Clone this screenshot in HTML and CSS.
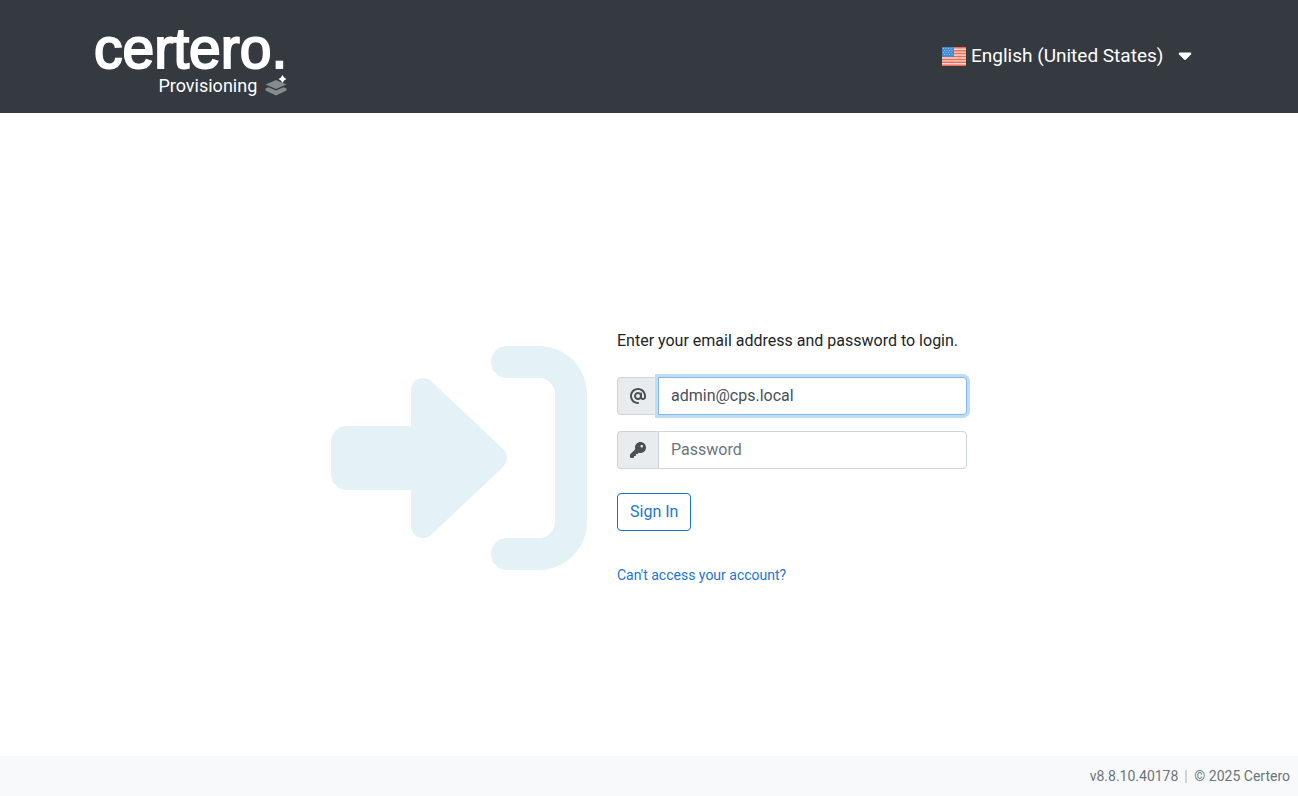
FILE: index.html
```
<!DOCTYPE html>
<html lang="en-US">

<head>
    <meta charset="UTF-8" />
    <meta name="viewport" content="width=device-width, initial-scale=1.0" />
    <title>Certero Provisioning</title>
    <link rel="stylesheet" href="styles.css">
</head>

<body>
    <header class="header">
        <div class="container">
            <a class="brand" href="#">
                <span class="brand-name">certero.</span>
                <span class="brand-product">
                    Provisioning
                    <svg class="brand-icon" viewBox="0 0 22 22" aria-hidden="true">
                        <path fill="#858a8f" d="M11 5 21.500 9.500 11 14 .5 9.500z" />
                        <path fill="#858a8f" d="M3.500 12.300 .5 13.500v2L11 20.500l10.500-5v-2l-3-1.200L11 15.500z" />
                        <path fill="#fff" d="M17.500 0 19.100 2.400 21.500 4 19.100 5.600 17.500 8 15.900 5.600 13.500 4 15.900 2.400z" />
                    </svg>
                </span>
            </a>

            <div class="language">
                <svg class="flag" viewBox="0 0 24 19" aria-hidden="true">
                    <path fill="#f5d9d2" d="M0 0h24v19H0z" />
                    <path stroke="#ee6a50" stroke-width="1.500" d="M0 .8h24M0 3.700h24M0 6.600h24M0 9.500h24M0 12.400h24M0 15.300h24M0 18.200h24" />
                    <path fill="#438bd0" d="M0 0h12v10H0z" />
                    <path stroke="#8fc0e8" stroke-dasharray="1 1.500" d="M1 1.500h10M2 3.500h9M1 5.500h10M2 7.500h9" />
                </svg>
                <select class="language-select" aria-label="Language">
                    <option>English (United States)</option>
                </select>
                <svg class="caret" viewBox="0 0 14 9" aria-hidden="true">
                    <path fill="#fff" d="M1.500.5h11q1.500.3.6 1.700L8 7.600q-1 .9-2 0L.9 2.200Q0 .8 1.500.5z" />
                </svg>
            </div>
        </div>
    </header>

    <main class="main">
        <svg class="login-icon" viewBox="0 0 512 512" aria-hidden="true">
            <path d="M344.700 238.500l-144.100-136C193.700 95.970 183.400 94.170 174.600 97.950C165.800 101.800 160.100 110.400 160.100 120v72H32.020C14.330 192 0 206.300 0 224v64c0 17.680 14.330 32 32.020 32h128.100v72c0 9.578 5.707 18.250 14.510 22.050c8.803 3.781 19.030 1.984 26-4.594l144.100-136C354.300 264.400 354.300 247.600 344.700 238.500zM416 32h-64c-17.670 0-32 14.330-32 32s14.330 32 32 32h64c17.670 0 32 14.330 32 32v256c0 17.670-14.330 32-32 32h-64c-17.670 0-32 14.330-32 32s14.330 32 32 32h64c53.020 0 96-42.980 96-96V128C512 74.980 469 32 416 32z" />
        </svg>

        <form class="login-form">
            <p class="intro">Enter your email address and password to login.</p>

            <div class="input-group">
                <label class="input-icon" for="email" aria-label="Email address">
                    <svg viewBox="0 0 512 512" aria-hidden="true">
                        <path d="M256 64C150 64 64 150 64 256s86 192 192 192c17.700 0 32 14.300 32 32s-14.300 32-32 32C114.600 512 0 397.400 0 256S114.600 0 256 0S512 114.600 512 256l0 32c0 53-43 96-96 96c-29.300 0-55.600-13.200-73.200-33.900C320 371.100 289.500 384 256 384c-70.700 0-128-57.300-128-128s57.300-128 128-128c27.900 0 53.700 8.900 74.700 24.100c5.700-5 13.100-8.100 21.300-8.100c17.700 0 32 14.300 32 32l0 80 0 32c0 17.700 14.300 32 32 32s32-14.300 32-32l0-32c0-106-86-192-192-192zm64 192a64 64 0 1 0 -128 0 64 64 0 1 0 128 0z" />
                    </svg>
                </label>
                <input class="form-control is-active" type="text" id="email" name="email" value="admin@cps.local" />
            </div>

            <div class="input-group">
                <label class="input-icon" for="password" aria-label="Password">
                    <svg viewBox="0 0 512 512" aria-hidden="true">
                        <path d="M282.300 343.700L248.100 376.100C244.500 381.500 238.400 384 232 384H192V424C192 437.300 181.300 448 168 448H128V488C128 501.300 117.300 512 104 512H24C10.750 512 0 501.300 0 488V408C0 401.600 2.529 395.500 7.029 391L168.300 229.700C162.900 212.800 160 194.700 160 176C160 78.800 238.800 0 336 0C433.200 0 512 78.800 512 176C512 273.200 433.200 352 336 352C317.300 352 299.200 349.100 282.300 343.700zM376 176C398.100 176 416 158.100 416 136C416 113.900 398.100 96 376 96C353.900 96 336 113.900 336 136C336 158.100 353.900 176 376 176z" />
                    </svg>
                </label>
                <input class="form-control" type="password" id="password" name="password" placeholder="Password" />
            </div>

            <button class="btn" type="submit">Sign In</button>

            <a class="help-link" href="#">Can't access your account?</a>
        </form>
    </main>

    <footer class="footer">
        <span>v8.8.10.40178</span>
        <span class="divider"></span>
        <span>© 2025 Certero</span>
    </footer>
</body>

</html>
```

FILE: styles.css
```
* {
    box-sizing: border-box;
}

body {
    margin: 0;
    min-height: 100vh;
    display: flex;
    flex-direction: column;
    font-family: Roboto, sans-serif;
    font-size: 16px;
    line-height: 24px;
    color: #212529;
    background: #fff;
}

/* header */
.header {
    padding: 23px 0 15px;
    background: #343a40;
    color: #fff;
}

.container {
    max-width: 1140px;
    margin: 0 auto;
    padding: 0 15px;
    display: flex;
    justify-content: space-between;
    align-items: flex-start;
}

.brand {
    display: flex;
    flex-direction: column;
    align-items: flex-end;
    color: #fff;
    text-decoration: none;
}

.brand-name {
    margin-bottom: 1px;
    font-family: "Liberation Sans", Arial, sans-serif;
    font-size: 57px;
    line-height: 50px;
    -webkit-text-stroke: 2px #fff;
}

.brand-product {
    display: flex;
    align-items: center;
    gap: 8px;
    font-size: 18px;
}

.brand-icon {
    width: 22px;
    height: 22px;
}

.language {
    position: relative;
    display: flex;
    align-items: center;
    gap: 5px;
    margin-top: 18px;
}

.flag {
    width: 24px;
    height: 19px;
}

.language-select {
    appearance: none;
    border: 0;
    padding: 0 40px 0 0;
    background: transparent;
    color: #fff;
    font-family: inherit;
    font-size: 19px;
    line-height: 30px;
    cursor: pointer;
}

.language-select option {
    color: #212529;
}

.caret {
    position: absolute;
    right: 12px;
    width: 14px;
    height: 9px;
    pointer-events: none;
}

/* login */
.main {
    flex: 1;
    display: flex;
    flex-wrap: wrap;
    justify-content: center;
    align-items: center;
    gap: 30px;
    padding: 46px 15px 0;
}

.login-icon {
    width: 256px;
    height: 256px;
    fill: #e4f1f7;
}

.login-form {
    width: 350px;
}

.intro {
    margin: 0 0 24px;
}

.input-group {
    display: flex;
    margin-bottom: 16px;
}

.input-icon {
    display: flex;
    align-items: center;
    padding: 0 12px;
    border: 1px solid #ced4da;
    border-right: 0;
    border-radius: 4px 0 0 4px;
    background: #e9ecef;
}

.input-icon svg {
    width: 16px;
    height: 16px;
    fill: #495057;
}

.form-control {
    flex: 1;
    min-width: 0;
    height: 38px;
    padding: 6px 12px;
    border: 1px solid #ced4da;
    border-radius: 0 4px 4px 0;
    background: #fff;
    color: #495057;
    font-family: inherit;
    font-size: 16px;
    outline: 0;
}

.form-control::placeholder {
    color: #6c757d;
}

.form-control:focus,
.form-control.is-active {
    border-color: #7fb9ee;
    box-shadow: 0 0 0 3px #bfdcf7;
}

.btn {
    display: block;
    height: 38px;
    margin-top: 24px;
    padding: 0 12px;
    border: 1px solid #1976bc;
    border-radius: 4px;
    background: #fff;
    color: #1976d2;
    font-family: inherit;
    font-size: 16px;
    cursor: pointer;
}

.btn:hover {
    background: #1976d2;
    color: #fff;
}

.help-link {
    display: inline-block;
    margin-top: 32px;
    font-size: 14px;
    color: #1976d2;
    text-decoration: none;
}

.help-link:hover {
    text-decoration: underline;
}

/* footer */
.footer {
    display: flex;
    justify-content: flex-end;
    align-items: center;
    gap: 7px;
    height: 40px;
    padding: 0 8px;
    background: #f8f9fa;
    color: #6c757d;
    font-size: 14px;
}

.divider {
    width: 2px;
    height: 13px;
    background: #ced4da;
}
```
